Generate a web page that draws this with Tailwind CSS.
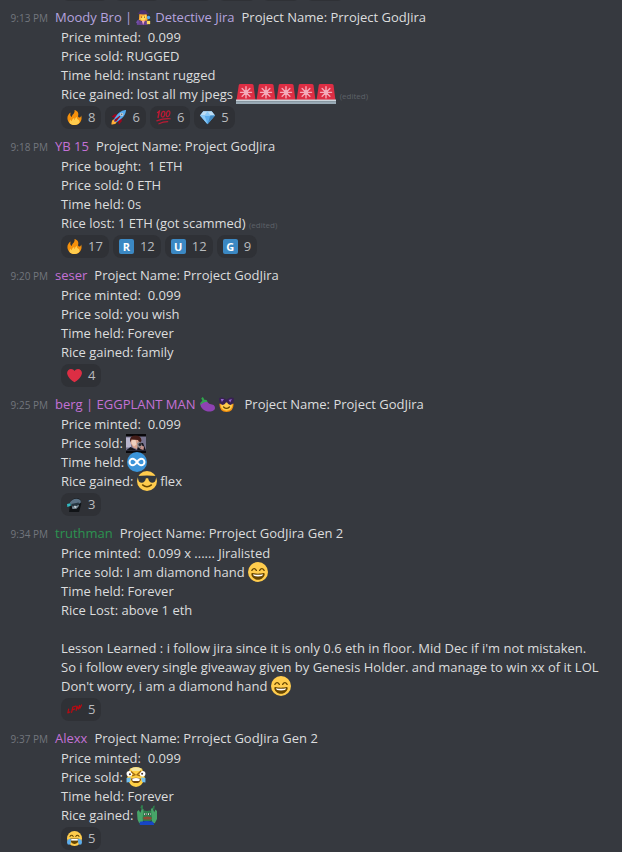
<!DOCTYPE html>
<html lang="en">
<head>
<meta charset="utf-8">
<meta name="viewport" content="width=device-width, initial-scale=1">
<title>Chat</title>
<script src="https://cdn.jsdelivr.net/npm/@tailwindcss/browser@4"></script>
</head>
<body class="min-h-screen bg-[#36393f] font-['Open_Sans','Noto_Sans',sans-serif] text-[13px] leading-[19px] text-[#dcddde]">

<svg class="hidden" aria-hidden="true">
  <symbol id="siren" viewBox="0 0 36 36">
    <path fill="#DD2E44" d="M5 2Q5 0 8 0H28Q31 0 31.500 2L35 29H1Z"/>
    <path stroke="#F4ABBA" stroke-width="2.500" stroke-linecap="round" d="M18 5v20M8 15h20M11 8l14 14M25 8L11 22"/>
    <circle cx="18" cy="15" r="4" fill="#F4ABBA"/>
    <path fill="#CCD6DD" d="M0 28h36v3H0z"/><path fill="#99AAB5" d="M0 31h36v5H0z"/>
  </symbol>
  <symbol id="fire" viewBox="0 0 36 36">
    <path fill="#F4900C" d="M35 19c0-2.100-.4-4.100-1-6-.5 3-2.300 5-4 5-3.500 0-4-3-3-6C28.500 7 24 1 18 0c1 5-1 8-4 11-1.500 1.500-2.500 4-2.500 6C9 16 8 14 8 11c0-2 .3-3 .6-5C4 9 1 14 1 19c0 10 7.600 17 17 17s17-7.600 17-17z"/>
    <path fill="#FFCC4D" d="M28.400 23.700c-3.400-.6-5.200-3-4.500-6.700-3.500 1-4.900 4-4.900 7-2-.5-2-3-1.500-5-4 1.500-6 5-6.500 8-1.500-.6-2.500-2-2.500-4-2 2-3 5-2.500 8C9 34.500 13 36 18 36c6 0 10-2.500 12-6 .3-2-.2-5-1.600-6.300z"/>
  </symbol>
  <symbol id="rocket" viewBox="0 0 36 36">
    <path fill="#A0041E" d="M1 17l8-7 16 1 1 16-7 8s.2-6-6.500-12.500S1 17 1 17z"/>
    <path fill="#FFAC33" d="M1 35s0-8 3-11 9 0 9 0 2 5-1 8-11 3-11 3z"/>
    <circle cx="9" cy="27" r="3" fill="#FFCC4D"/>
    <path fill="#55ACEE" d="M36 0S26 0 18 8C13 13 7 21 7 24s2 5 5 5 11-6 16-11c8-8 8-18 8-18z"/>
    <path fill="#A0041E" d="M8 28s0-4 1-5 13-10.800 14-9.800S14 26 13 27s-5 1-5 1z"/>
    <circle cx="25.500" cy="10.500" r="4" fill="#CCD6DD"/><circle cx="25.500" cy="10.500" r="2" fill="#66757F"/>
  </symbol>
  <symbol id="hundred" viewBox="0 0 36 36">
    <g fill="none" stroke="#BB1A34" stroke-linecap="round">
      <path stroke-width="3.500" d="M4 6l4-3-3 15"/>
      <ellipse cx="17" cy="10" rx="4" ry="7" stroke-width="3" transform="rotate(14 17 10)"/>
      <ellipse cx="29" cy="9" rx="4" ry="7" stroke-width="3" transform="rotate(14 29 9)"/>
      <path stroke-width="3" d="M2 26Q17 20 34 21M7 33Q17 28 28 28"/>
    </g>
  </symbol>
  <symbol id="gem" viewBox="0 0 36 36">
    <path fill="#5DADEC" d="M8 3h20l8 10-18 21L0 13z"/>
    <path fill="#BDDDF4" d="M8 3h20l-3 10H11L0 13zM25 13l3-10 8 10z"/>
    <path fill="#8CCAF7" d="M11 13l7-10 7 10zM0 13h11l7 21z"/>
    <path fill="#4289C1" d="M25 13h11L18 34z"/>
  </symbol>
  <symbol id="heart" viewBox="0 0 36 36">
    <path fill="#DD2E44" d="M35.900 11.800C35.900 6.600 31.600 2.300 26.400 2.300c-3.500 0-6.600 2-8.300 4.800-1.700-2.900-4.800-4.800-8.300-4.800-5.300 0-9.500 4.300-9.500 9.500 0 .7.100 1.500.2 2.200C1.800 22.100 10.900 31.400 18 34c7.200-2.600 16.200-11.900 17.600-20 .2-.7.300-1.400.3-2.200z"/>
  </symbol>
  <symbol id="detective" viewBox="0 0 36 36">
    <path fill="#FFAC33" d="M8 10h18l2 14q-6 5-10 4L7 24z"/>
    <path fill="#66418E" d="M2 36q0-10 8-11l7 5 6-5q5 1 5 11z"/>
    <path fill="#744EAA" d="M7 22q-6 3-7 9l6 2z"/>
    <path fill="#FFDC5D" d="M10 9h14v9q-1 7-7 7t-7-7z"/>
    <path fill="#FFAC33" d="M9 9h16l-4 5q-6-1-11 6z"/>
    <circle cx="13.500" cy="17" r="1.300" fill="#662113"/><circle cx="20.500" cy="17" r="1.300" fill="#662113"/>
    <path fill="#4C3270" d="M3 8q6-1 7-7 7-2 14 0 1 6 8 7-14 6-29 0z"/>
    <path fill="#F4ABBA" d="M14 26l3 10 4-10z"/>
    <circle cx="30" cy="18" r="4" fill="#55ACEE"/>
    <path fill="#FFDC5D" d="M26 26h8v8h-8z"/>
  </symbol>
  <symbol id="eggplant" viewBox="0 0 36 36">
    <path fill="#8E42B2" d="M9 9c8-3 10 7 15 8 7 1 12 3 12 9 0 6-6 9-13 9C11 35 0 26 1 16c.500-4 4-6 8-7z"/>
    <path fill="#2FA64C" d="M1 19q-1-7 5-9L3 3l4-3 4 7q6-1 7 5-5-2-8 1-4 1-9 6z"/>
  </symbol>
  <symbol id="shades" viewBox="0 0 36 36">
    <circle cx="18" cy="18" r="18" fill="#FFCC4D"/>
    <path fill="none" stroke="#664500" stroke-width="2.500" stroke-linecap="round" d="M10 25q8 7 16 0"/>
    <path fill="#31373D" d="M1 9q17-2 34 0v3q-1 1-1.500 4-1 5-6 5-6 0-7.500-8h-4q-1.500 8-7.500 8-5 0-6-5Q2 13 1 12z"/>
  </symbol>
  <symbol id="partyshades" viewBox="0 0 36 36">
    <path fill="#F4900C" d="M1 16h34q0 20-17 20T1 16z"/>
    <path fill="#FFCC4D" d="M4 13h28v7q-2 13-14 13T4 20z"/>
    <path fill="#392153" d="M0 3q9-5 17 3h2q8-8 17-3l-1 9q-2 7-8 7t-8-8h-2q-2 8-8 8t-8-7z"/>
    <path fill="#9266CC" d="M4 5l8 0-5 7zM23 7l8-2-4 8z"/>
    <path fill="none" stroke="#664500" stroke-width="3" stroke-linecap="round" d="M11 24q7 7 14 0"/>
  </symbol>
  <symbol id="infinity" viewBox="0 0 36 36">
    <circle cx="18" cy="18" r="18" fill="#3B94D9"/>
    <path fill="none" stroke="#fff" stroke-width="3.500" d="M18 18C14 12.500 12 12 10.500 12a6 6 0 0 0 0 12c2 0 4-1 7.500-6s5.500-6 7.500-6a6 6 0 0 1 0 12c-2 0-4-1-7.500-6z"/>
  </symbol>
  <symbol id="grin" viewBox="0 0 36 36">
    <circle cx="18" cy="18" r="18" fill="#FFCC4D"/>
    <path fill="#664500" d="M18 21c-4 0-7-.5-10-1-1 0-2 0-2 2 0 4 5 10 12 10s12-6 12-10c0-2-1-2-2-2-3 .5-6 1-10 1z"/>
    <path fill="#fff" d="M9 22q9 2 18 0 0 4-9 4t-9-4z"/>
    <path fill="none" stroke="#664500" stroke-width="2.500" stroke-linecap="round" d="M7 15q4-6 8 0M21 15q4-6 8 0"/>
  </symbol>
  <symbol id="joy" viewBox="0 0 36 36">
    <circle cx="18" cy="18" r="18" fill="#FFCC4D"/>
    <path fill="#664500" d="M8 18h20q0 13-10 13T8 18z"/><path fill="#fff" d="M10 19h16v4H10z"/>
    <path fill="none" stroke="#664500" stroke-width="2.500" stroke-linecap="round" d="M7 13q4-6 8 0M21 13q4-6 8 0"/>
    <path fill="#5DADEC" d="M9 18Q0 20 0 27q0 6 5 6 6 0 4-15zM27 18q9 2 9 9 0 6-5 6-6 0-4-15z"/>
  </symbol>
  <symbol id="madjoy" viewBox="0 0 36 36">
    <path fill="#FFD045" d="M7 3Q18-3 29 3L34 20Q29 36 18 36T2 20z"/>
    <path fill="#F4E6A0" d="M8 3q10-5 20 0l-3 4H11z"/>
    <circle cx="6" cy="12" r="5" fill="#fff"/><circle cx="30" cy="12" r="5" fill="#fff"/>
    <circle cx="7" cy="13" r="1.800" fill="#47332b"/><circle cx="29" cy="12" r="1.800" fill="#47332b"/>
    <path fill="none" stroke="#A06A12" stroke-width="2.500" d="M9 8l7 6-5 2M27 7l-7 7 5 2"/>
    <path fill="#70450D" d="M9 21q9-3 18 0-1 8-9 8t-9-8z"/><path fill="#fff" d="M11 21q7-2 14 0l-1 4H12z"/>
    <path fill="#72BEEF" d="M1 20l8-1-2 8-6 1zM35 20l-8-1 2 8 6 1z"/>
  </symbol>
  <symbol id="frog" viewBox="0 0 36 36">
    <path fill="#171D1A" d="M4 14h28v18H4z"/>
    <path fill="#2F7D4C" d="M9 12q4-4 9-1 5-3 10 1l1 14q-9 7-20 2z"/>
    <path fill="#47A568" d="M0 12l3-3 3 5 3-8 3 2-2 16 1 7-7 2-3-7zM36 11l-3-3-2 5-3-8-3 2 2 16-1 9 6 1 4-8z"/>
    <path fill="#2F7D4C" d="M6 5l2-5 3 1-1 8zM28 6l1-4 3-1-1 8z"/>
    <path fill="#E8EEE6" d="M13 15h5v3h-5zM20 15h5v3h-5z"/><path fill="#111" d="M15 15h2v3h-2zM22 15h2v3h-2z"/>
    <path fill="#8F4935" d="M11 22q8-3 15 0v4H12z"/>
    <path fill="#1746C5" d="M5 30q13-2 24 0l2 6H5z"/>
  </symbol>
  <symbol id="portrait" viewBox="0 0 40 38">
    <path fill="#09080B" d="M0 0h40v38H0z"/><path fill="#77738F" d="M0 5h40v28H0z"/>
    <path fill="#B9B5CE" d="M0 7h10v20H0z"/>
    <path fill="#D7A48F" d="M10 9h16l2 11-6 10-8-3-5-9z"/>
    <path fill="#EED0C0" d="M11 13l8-2 2 10-5 4-5-6z"/>
    <path fill="#431C18" d="M8 12Q8 3 19 3t12 10l-3 7-4-8-13-1-2 6z"/>
    <path fill="#15131A" d="M0 33l9-7 6 3 8 4zM22 33l3-15h9l6 15z"/>
    <path fill="#8B8A91" d="M22 18l6-3 5 8-6 6-4-4z"/><circle cx="28" cy="21" r="3" fill="#29272C"/>
    <path fill="#C7938C" d="M30 23l6 2-1 7-7-2z"/>
  </symbol>
  <symbol id="darkface" viewBox="0 0 36 36">
    <path fill="#111417" d="M5 36l2-18Q9 4 22 3t12 15l-5 18z"/>
    <path fill="#5B7285" d="M7 13Q13 3 24 4t9 10l-7 4-17 2z"/>
    <path fill="#7B8D99" d="M11 19l13-3 5 5-6 7-10 1z"/>
    <path fill="#253540" d="M10 17l18-4 1 5-7 4-3-2-5 4z"/>
    <path fill="#32B9C2" d="M0 17l8-2 1 6-8 3z"/><path fill="#D3DADD" d="M16 22l7 0-3 5z"/>
  </symbol>
  <symbol id="redtag" viewBox="0 0 36 36">
    <g fill="none" stroke="#B80B13" stroke-width="3" stroke-linecap="round" stroke-linejoin="round">
      <path d="M4 17L2 26l5-2M11 25l3-13 7-2M13 19l5-2M22 20l2-10 3 7 3-9 1 7 4-8"/>
    </g>
  </symbol>
</svg>

<div class="flex h-px items-end gap-1 overflow-hidden pl-[61px]" aria-hidden="true">
  <div class="h-6 w-12 shrink-0 rounded-lg bg-[#2f3136]"></div>
  <div class="h-6 w-12 shrink-0 rounded-lg bg-[#2f3136]"></div>
  <div class="h-6 w-12 shrink-0 rounded-lg bg-[#2f3136]"></div>
  <div class="h-6 w-10 shrink-0 rounded-lg bg-[#2f3136]"></div>
  <div class="h-6 w-10 shrink-0 rounded-lg bg-[#2f3136]"></div>
  <div class="h-6 w-10 shrink-0 rounded-lg bg-[#2f3136]"></div>
</div>

<main class="flex flex-col gap-[7px] pt-1.5">

  <article>
    <header class="flex items-baseline gap-[7px] leading-5">
      <time class="w-12 shrink-0 text-right text-[10px] text-[#72767d]">9:13 PM</time>
      <h2 class="flex items-center font-medium text-[#b5a3df]">Moody Bro | <svg class="mx-1 size-[15px]"><use href="#detective"/></svg>Detective Jira</h2>
      <p>Project Name: Prroject GodJira</p>
    </header>
    <div class="pl-[61px]">
      <p>Price minted:&nbsp; 0.099</p>
      <p>Price sold: RUGGED</p>
      <p>Time held: instant rugged</p>
      <p>Rice gained: lost all my jpegs <svg class="-mt-px inline-block size-5 align-bottom"><use href="#siren"/></svg><svg class="-mt-px inline-block size-5 align-bottom"><use href="#siren"/></svg><svg class="-mt-px inline-block size-5 align-bottom"><use href="#siren"/></svg><svg class="-mt-px inline-block size-5 align-bottom"><use href="#siren"/></svg><svg class="-mt-px inline-block size-5 align-bottom"><use href="#siren"/></svg> <small class="text-[8px] leading-none text-[#5d6168]">(edited)</small></p>
    </div>
    <div class="mt-0.5 flex flex-wrap gap-1 pl-[61px] text-[#b9bbbe]">
      <button class="flex h-[23px] items-center gap-1.5 rounded-lg bg-[#2f3136] px-1.5"><svg class="size-[15px]"><use href="#fire"/></svg>8</button>
      <button class="flex h-[23px] items-center gap-1.5 rounded-lg bg-[#2f3136] px-1.5"><svg class="size-[15px]"><use href="#rocket"/></svg>6</button>
      <button class="flex h-[23px] items-center gap-1.5 rounded-lg bg-[#2f3136] px-1.5"><svg class="size-[15px]"><use href="#hundred"/></svg>6</button>
      <button class="flex h-[23px] items-center gap-1.5 rounded-lg bg-[#2f3136] px-1.5"><svg class="size-[15px]"><use href="#gem"/></svg>5</button>
    </div>
  </article>

  <article>
    <header class="flex items-baseline gap-[7px] leading-5">
      <time class="w-12 shrink-0 text-right text-[10px] text-[#72767d]">9:18 PM</time>
      <h2 class="font-medium text-[#c471d6]">YB 15</h2>
      <p>Project Name: Project GodJira</p>
    </header>
    <div class="pl-[61px]">
      <p>Price bought:&nbsp; 1 ETH</p>
      <p>Price sold: 0 ETH</p>
      <p>Time held: 0s</p>
      <p>Rice lost: 1 ETH (got scammed) <small class="text-[8px] leading-none text-[#5d6168]">(edited)</small></p>
    </div>
    <div class="mt-0.5 flex flex-wrap gap-1 pl-[61px] text-[#b9bbbe]">
      <button class="flex h-[23px] items-center gap-1.5 rounded-lg bg-[#2f3136] px-1.5"><svg class="size-[15px]"><use href="#fire"/></svg>17</button>
      <button class="flex h-[23px] items-center gap-1.5 rounded-lg bg-[#2f3136] px-1.5"><span class="flex size-[15px] items-center justify-center rounded-xs bg-[#3b88c3] text-[11px] leading-none font-bold text-white">R</span>12</button>
      <button class="flex h-[23px] items-center gap-1.5 rounded-lg bg-[#2f3136] px-1.5"><span class="flex size-[15px] items-center justify-center rounded-xs bg-[#3b88c3] text-[11px] leading-none font-bold text-white">U</span>12</button>
      <button class="flex h-[23px] items-center gap-1.5 rounded-lg bg-[#2f3136] px-1.5"><span class="flex size-[15px] items-center justify-center rounded-xs bg-[#3b88c3] text-[11px] leading-none font-bold text-white">G</span>9</button>
    </div>
  </article>

  <article>
    <header class="flex items-baseline gap-[7px] leading-5">
      <time class="w-12 shrink-0 text-right text-[10px] text-[#72767d]">9:20 PM</time>
      <h2 class="font-medium text-[#c471d6]">seser</h2>
      <p>Project Name: Prroject GodJira</p>
    </header>
    <div class="pl-[61px]">
      <p>Price minted:&nbsp; 0.099</p>
      <p>Price sold: you wish</p>
      <p>Time held: Forever</p>
      <p>Rice gained: family</p>
    </div>
    <div class="mt-0.5 flex flex-wrap gap-1 pl-[61px] text-[#b9bbbe]">
      <button class="flex h-[23px] items-center gap-1.5 rounded-lg bg-[#2f3136] px-1.5"><svg class="size-[15px]"><use href="#heart"/></svg>4</button>
    </div>
  </article>

  <article>
    <header class="flex items-baseline gap-[7px] leading-5">
      <time class="w-12 shrink-0 text-right text-[10px] text-[#72767d]">9:25 PM</time>
      <h2 class="flex items-center font-medium text-[#c471d6]">berg | EGGPLANT MAN<svg class="ml-1 size-[15px]"><use href="#eggplant"/></svg><svg class="mx-1 size-[15px]"><use href="#partyshades"/></svg></h2>
      <p>Project Name: Project GodJira</p>
    </header>
    <div class="pl-[61px]">
      <p>Price minted:&nbsp; 0.099</p>
      <p>Price sold: <svg class="inline-block h-[19px] w-5 align-bottom"><use href="#portrait"/></svg></p>
      <p>Time held: <svg class="-mt-px inline-block size-5 align-bottom"><use href="#infinity"/></svg></p>
      <p>Rice gained: <svg class="-mt-px inline-block size-5 align-bottom"><use href="#shades"/></svg> flex</p>
    </div>
    <div class="mt-0.5 flex flex-wrap gap-1 pl-[61px] text-[#b9bbbe]">
      <button class="flex h-[23px] items-center gap-1.5 rounded-lg bg-[#2f3136] px-1.5"><svg class="size-[15px]"><use href="#darkface"/></svg>3</button>
    </div>
  </article>

  <article>
    <header class="flex items-baseline gap-[7px] leading-5">
      <time class="w-12 shrink-0 text-right text-[10px] text-[#72767d]">9:34 PM</time>
      <h2 class="font-medium text-[#2c9350]">truthman</h2>
      <p>Project Name: Prroject GodJira Gen 2</p>
    </header>
    <div class="pl-[61px]">
      <p>Price minted:&nbsp; 0.099 x ...... Jiralisted</p>
      <p>Price sold: I am diamond hand <svg class="-mt-px inline-block size-5 align-bottom"><use href="#grin"/></svg></p>
      <p>Time held: Forever</p>
      <p>Rice Lost: above 1 eth</p>
      <p class="mt-[19px]">Lesson Learned : i follow jira since it is only 0.6 eth in floor. Mid Dec if i'm not mistaken.</p>
      <p>So i follow every single giveaway given by Genesis Holder. and manage to win xx of it LOL</p>
      <p>Don't worry, i am a diamond hand <svg class="-mt-px inline-block size-5 align-bottom"><use href="#grin"/></svg></p>
    </div>
    <div class="mt-0.5 flex flex-wrap gap-1 pl-[61px] text-[#b9bbbe]">
      <button class="flex h-[23px] items-center gap-1.5 rounded-lg bg-[#2f3136] px-1.5"><svg class="size-[15px]"><use href="#redtag"/></svg>5</button>
    </div>
  </article>

  <article>
    <header class="flex items-baseline gap-[7px] leading-5">
      <time class="w-12 shrink-0 text-right text-[10px] text-[#72767d]">9:37 PM</time>
      <h2 class="font-medium text-[#c471d6]">Alexx</h2>
      <p>Project Name: Prroject GodJira Gen 2</p>
    </header>
    <div class="pl-[61px]">
      <p>Price minted:&nbsp; 0.099</p>
      <p>Price sold: <svg class="-mt-px inline-block size-5 align-bottom"><use href="#madjoy"/></svg></p>
      <p>Time held: Forever</p>
      <p>Rice gained: <svg class="-mt-px inline-block size-5 align-bottom"><use href="#frog"/></svg></p>
    </div>
    <div class="mt-0.5 flex flex-wrap gap-1 pl-[61px] text-[#b9bbbe]">
      <button class="flex h-[23px] items-center gap-1.5 rounded-lg bg-[#2f3136] px-1.5"><svg class="size-[15px]"><use href="#joy"/></svg>5</button>
    </div>
  </article>
</main>
</body>
</html>
